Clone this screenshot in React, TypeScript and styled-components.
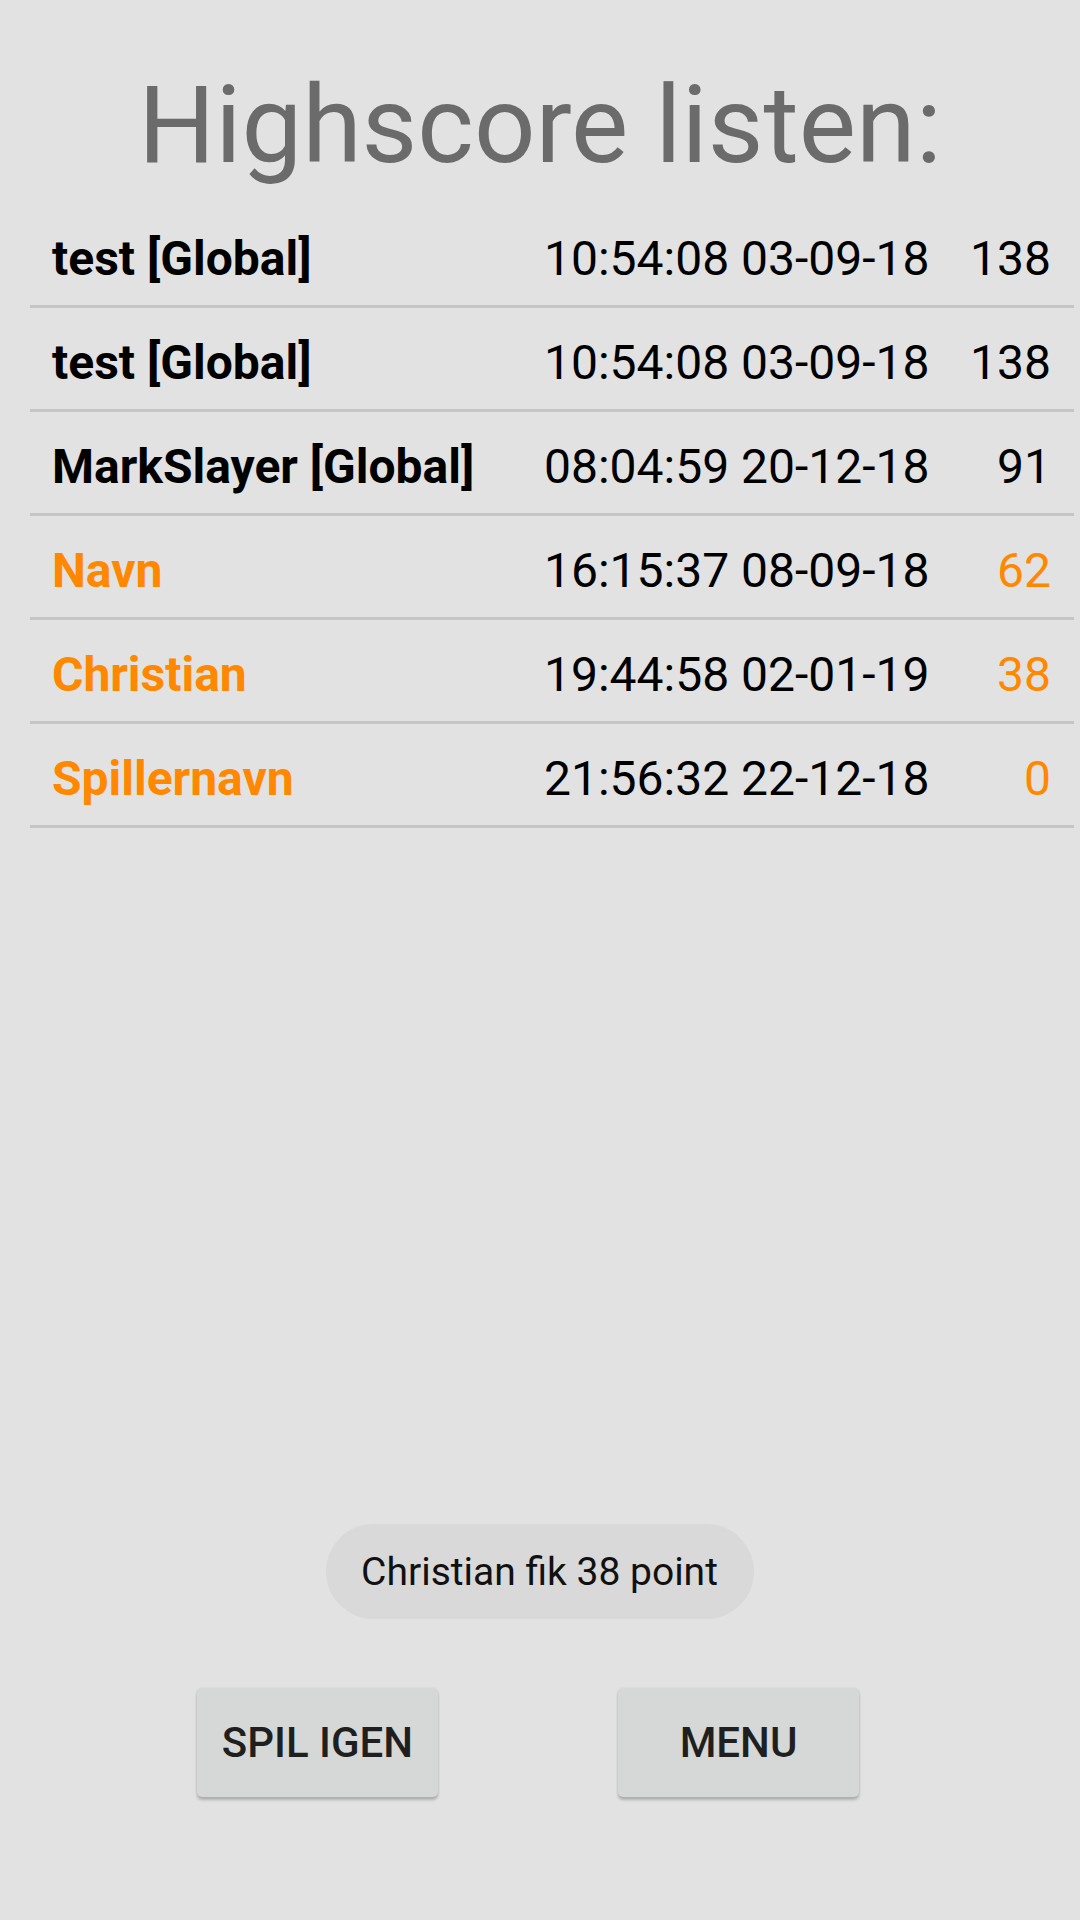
import React from "react";
import styled, { createGlobalStyle } from "styled-components";

const GlobalStyle = createGlobalStyle`
  html, body {
    margin: 0;
    padding: 0;
    background: #e2e2e2;
  }
  body {
    font-family: Roboto, "Liberation Sans", sans-serif;
  }
`;

const Screen = styled.div`
  min-height: 1920px;
  display: flex;
  flex-direction: column;
  background: #e2e2e2;
`;

const Title = styled.h1`
  margin: 0;
  padding-top: 71px;
  height: 144px;
  box-sizing: border-box;
  font-family: Roboto, sans-serif;
  font-weight: 400;
  font-size: 108px;
  line-height: 108px;
  color: #6b6b6b;
  text-align: center;
  white-space: nowrap;
`;

const Table = styled.div`
  margin: 60px 6px 0 30px;
  display: flex;
  flex-direction: column;
`;

const Row = styled.div`
  display: grid;
  grid-template-columns: 492px 384px 1fr;
  align-items: center;
  padding: 7px 23px 0 22px;
  box-sizing: content-box;
  height: 94px;
  border-bottom: 3px solid #c6c6c6;
  font-family: Roboto, sans-serif;
  font-size: 48px;
`;

const Name = styled.span<{ $local: boolean }>`
  font-weight: 700;
  color: ${(p) => (p.$local ? "#ff8800" : "#000000")};
  white-space: nowrap;
`;

const When = styled.span`
  font-weight: 400;
  color: #000000;
  white-space: nowrap;
`;

const Score = styled.span<{ $local: boolean }>`
  font-weight: 400;
  text-align: right;
  color: ${(p) => (p.$local ? "#ff8800" : "#000000")};
`;

const Spacer = styled.div`
  flex: 1;
`;

const Toast = styled.div`
  align-self: center;
  margin-left: -1px;
  height: 95px;
  width: 428px;
  border-radius: 48px;
  background: #d9d9d9;
  display: flex;
  align-items: center;
  justify-content: center;
  font-family: Roboto, sans-serif;
  font-size: 39px;
  color: #111111;
  margin-bottom: 69px;
`;

const ButtonRow = styled.div`
  display: flex;
  gap: 180px;
  padding-left: 197px;
  padding-bottom: 123px;
`;

const Button = styled.button`
  width: 241px;
  height: 109px;
  border: none;
  border-radius: 5px;
  background: #d6d7d7;
  box-shadow: 0 3px 3px rgba(0, 0, 0, 0.22), 0 0 2px rgba(0, 0, 0, 0.1);
  font-family: Roboto, sans-serif;
  font-weight: 500;
  font-size: 42px;
  color: #1f1f1f;
  padding: 0;
  text-transform: uppercase;
`;

type Entry = { name: string; when: string; score: number; local: boolean };

const entries: Entry[] = [
  { name: "test [Global]", when: "10:54:08 03-09-18", score: 138, local: false },
  { name: "test [Global]", when: "10:54:08 03-09-18", score: 138, local: false },
  { name: "MarkSlayer [Global]", when: "08:04:59 20-12-18", score: 91, local: false },
  { name: "Navn", when: "16:15:37 08-09-18", score: 62, local: true },
  { name: "Christian", when: "19:44:58 02-01-19", score: 38, local: true },
  { name: "Spillernavn", when: "21:56:32 22-12-18", score: 0, local: true },
];

export default function App() {
  return (
    <>
      <GlobalStyle />
      <Screen>
        <Title>Highscore listen:</Title>
        <Table>
          {entries.map((e, i) => (
            <Row key={i}>
              <Name $local={e.local}>{e.name}</Name>
              <When>{e.when}</When>
              <Score $local={e.local}>{e.score}</Score>
            </Row>
          ))}
        </Table>
        <Spacer />
        <Toast>Christian fik 38 point</Toast>
        <ButtonRow>
          <Button>Spil igen</Button>
          <Button>Menu</Button>
        </ButtonRow>
      </Screen>
    </>
  );
}
